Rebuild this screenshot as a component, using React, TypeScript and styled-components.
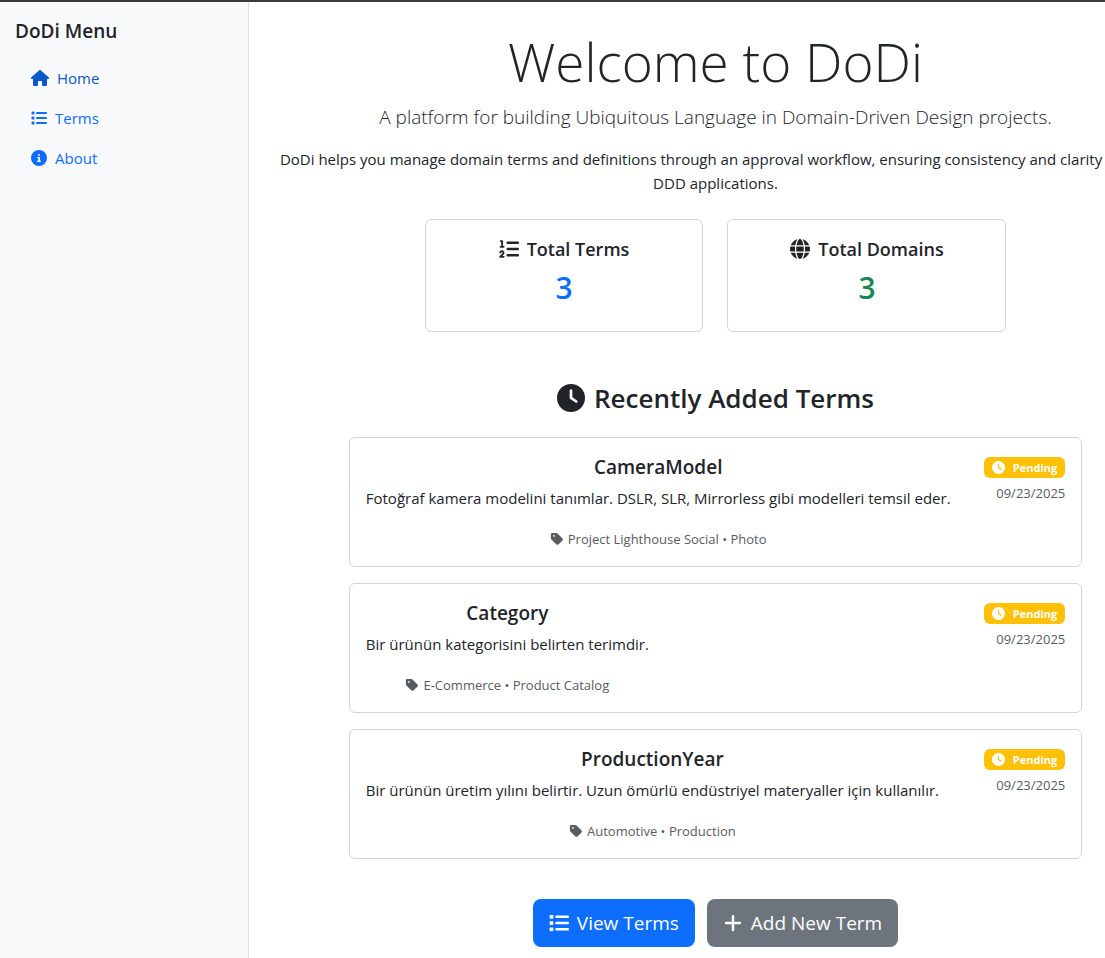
import React from "react";
import styled, { createGlobalStyle } from "styled-components";
import {
  FaCircleInfo,
  FaClock,
  FaGlobe,
  FaHouse,
  FaList,
  FaListOl,
  FaPlus,
  FaTag,
} from "react-icons/fa6";

const GlobalStyle = createGlobalStyle`
  *, *::before, *::after { box-sizing: border-box; }
  body {
    margin: 0;
    background: #fff;
    color: #212529;
    font-family: "Segoe UI", "Open Sans", "Noto Sans", sans-serif;
    font-size: 15px;
    line-height: 24px;
  }
  h1, h2, h3, p { margin: 0; }
  svg { flex: none; display: block; }
`;

const Shell = styled.div`
  display: flex;
  min-height: 100vh;
  overflow-x: hidden;
  border-top: 2px solid #3b3b3b;
`;

const Sidebar = styled.aside`
  flex: 0 0 249px;
  padding: 16px 15px;
  background: #f8f9fa;
  border-right: 1px solid #dee2e6;
`;

const MenuTitle = styled.h2`
  margin-bottom: 14px;
  font-size: 19px;
  font-weight: 600;
  line-height: 26px;
`;

const MenuLink = styled.a<{ $current?: boolean }>`
  display: flex;
  align-items: center;
  gap: 8px;
  padding: 8px 16px;
  color: ${(p) => (p.$current ? "#0a58ca" : "#0d6efd")};
  text-decoration: none;

  svg { font-size: ${(p) => (p.$current ? 18 : 16)}px; }
`;

const Main = styled.main`
  flex: 1 0 933px;
  padding: 25px 24px 10px;
  text-align: center;
`;

const Title = styled.h1`
  margin-bottom: 6px;
  font-size: 53px;
  font-weight: 300;
  line-height: 70px;
`;

const Lead = styled.p`
  margin-bottom: 16px;
  font-size: 19px;
  font-weight: 300;
  line-height: 28px;
`;

const Stats = styled.div`
  display: grid;
  grid-template-columns: 1fr 1fr;
  gap: 24px;
  width: calc(100% * 2 / 3 - 8px);
  margin: 24px auto 48px;
`;

const Card = styled.article`
  padding: 16px 16px 14px;
  border: 1px solid #d3d4d5;
  border-radius: 6px;
  background: #fff;
`;

const CardTitle = styled.h3`
  margin-bottom: 6px;
  font-size: 19px;
  font-weight: 600;
  line-height: 26px;
`;

const StatCard = styled(Card)`
  padding-bottom: 23px;
`;

const StatTitle = styled(CardTitle)`
  display: flex;
  align-items: center;
  justify-content: center;
  gap: 8px;
  font-size: 18px;

  svg { font-size: 20px; }
`;

const StatValue = styled.p<{ $color: string }>`
  color: ${(p) => p.$color};
  font-size: 30px;
  font-weight: 600;
  line-height: 40px;
`;

const SectionTitle = styled.h2`
  display: flex;
  align-items: center;
  justify-content: center;
  gap: 9px;
  margin-bottom: 21px;
  font-size: 26px;
  font-weight: 600;
  line-height: 36px;

  svg { font-size: 28px; }
`;

const TermList = styled.div`
  display: grid;
  gap: 16px;
  width: calc(100% * 5 / 6 - 4px);
  margin: 0 auto;
`;

const TermCard = styled(Card)`
  display: flex;
  justify-content: space-between;
  align-items: flex-start;
`;

const Domain = styled.p`
  display: flex;
  align-items: center;
  justify-content: center;
  gap: 4px;
  margin-top: 16px;
  color: #595c5f;
  font-size: 13px;
  line-height: 26px;

  svg { font-size: 14px; }
`;

const TermStatus = styled.div`
  display: flex;
  flex-direction: column;
  align-items: flex-end;
  gap: 3px;
  padding-top: 3px;
  color: #595c5f;
  font-size: 13px;
`;

const Badge = styled.span`
  display: flex;
  align-items: center;
  gap: 8px;
  padding: 0 8px;
  border-radius: 6px;
  background: #ffc107;
  color: #fff;
  font-size: 11px;
  font-weight: 700;
  line-height: 21px;

  svg { font-size: 13px; }
`;

const Actions = styled.div`
  display: flex;
  justify-content: center;
  gap: 12px;
  margin-top: 40px;
`;

const ActionButton = styled.button<{ $background: string }>`
  display: flex;
  align-items: center;
  gap: 8px;
  padding: 9px 16px;
  border: 0;
  border-radius: 8px;
  background: ${(p) => p.$background};
  color: #fff;
  font: inherit;
  font-size: 19px;
  line-height: 30px;
  cursor: pointer;

  svg { font-size: 20px; }
`;

const terms = [
  {
    name: "CameraModel",
    description:
      "Fotoğraf kamera modelini tanımlar. DSLR, SLR, Mirrorless gibi modelleri temsil eder.",
    domain: "Project Lighthouse Social • Photo",
    date: "09/23/2025",
  },
  {
    name: "Category",
    description: "Bir ürünün kategorisini belirten terimdir.",
    domain: "E-Commerce • Product Catalog",
    date: "09/23/2025",
  },
  {
    name: "ProductionYear",
    description:
      "Bir ürünün üretim yılını belirtir. Uzun ömürlü endüstriyel materyaller için kullanılır.",
    domain: "Automotive • Production",
    date: "09/23/2025",
  },
];

export default function App() {
  return (
    <>
      <GlobalStyle />
      <Shell>
        <Sidebar>
          <MenuTitle>DoDi Menu</MenuTitle>
          <nav>
            <MenuLink href="#home" $current>
              <FaHouse />
              Home
            </MenuLink>
            <MenuLink href="#terms">
              <FaList />
              Terms
            </MenuLink>
            <MenuLink href="#about">
              <FaCircleInfo />
              About
            </MenuLink>
          </nav>
        </Sidebar>
        <Main>
          <Title>Welcome to DoDi</Title>
          <Lead>
            A platform for building Ubiquitous Language in Domain-Driven Design projects.
          </Lead>
          <p>
            DoDi helps you manage domain terms and definitions through an approval
            workflow, ensuring consistency and clarity across DDD applications.
          </p>
          <Stats>
            <StatCard>
              <StatTitle>
                <FaListOl />
                Total Terms
              </StatTitle>
              <StatValue $color="#0d6efd">3</StatValue>
            </StatCard>
            <StatCard>
              <StatTitle>
                <FaGlobe />
                Total Domains
              </StatTitle>
              <StatValue $color="#198754">3</StatValue>
            </StatCard>
          </Stats>
          <SectionTitle>
            <FaClock />
            Recently Added Terms
          </SectionTitle>
          <TermList>
            {terms.map((term) => (
              <TermCard key={term.name}>
                <div>
                  <CardTitle>{term.name}</CardTitle>
                  <p>{term.description}</p>
                  <Domain>
                    <FaTag />
                    {term.domain}
                  </Domain>
                </div>
                <TermStatus>
                  <Badge>
                    <FaClock />
                    Pending
                  </Badge>
                  <time>{term.date}</time>
                </TermStatus>
              </TermCard>
            ))}
          </TermList>
          <Actions>
            <ActionButton type="button" $background="#0d6efd">
              <FaList />
              View Terms
            </ActionButton>
            <ActionButton type="button" $background="#6c757d">
              <FaPlus />
              Add New Term
            </ActionButton>
          </Actions>
        </Main>
      </Shell>
    </>
  );
}
